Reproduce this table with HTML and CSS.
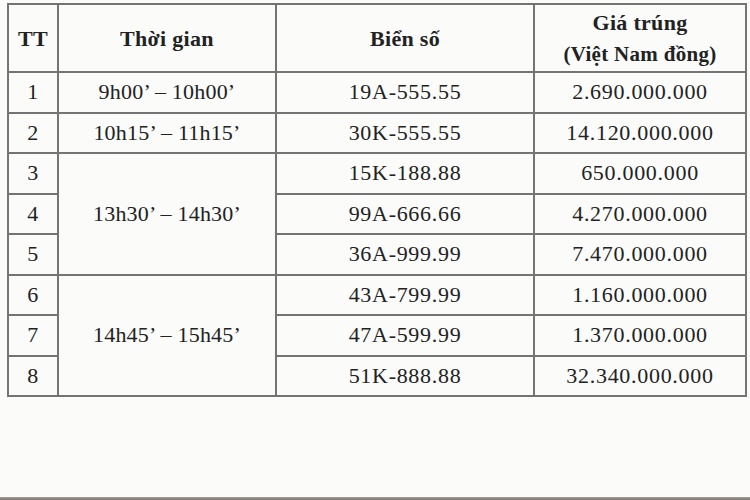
FILE: index.html
```html
<!DOCTYPE html>
<html lang="vi">
<head>
<meta charset="utf-8">
<link rel="stylesheet" href="styles.css">
</head>
<body>
<div class="sheet">
<table class="results">
  <colgroup>
    <col class="c-tt"><col class="c-time"><col class="c-plate"><col class="c-price">
  </colgroup>
  <thead>
    <tr class="head">
      <th>TT</th>
      <th>Thời gian</th>
      <th>Biển số</th>
      <th>Giá trúng<br><span class="unit">(Việt Nam đồng)</span></th>
    </tr>
  </thead>
  <tbody>
    <tr><td>1</td><td class="time">9h00’ – 10h00’</td><td>19A-555.55</td><td>2.690.000.000</td></tr>
    <tr><td>2</td><td class="time">10h15’ – 11h15’</td><td>30K-555.55</td><td>14.120.000.000</td></tr>
    <tr><td>3</td><td class="time" rowspan="3">13h30’ – 14h30’</td><td>15K-188.88</td><td>650.000.000</td></tr>
    <tr><td>4</td><td>99A-666.66</td><td>4.270.000.000</td></tr>
    <tr><td>5</td><td>36A-999.99</td><td>7.470.000.000</td></tr>
    <tr><td>6</td><td class="time" rowspan="3">14h45’ – 15h45’</td><td>43A-799.99</td><td>1.160.000.000</td></tr>
    <tr><td>7</td><td>47A-599.99</td><td>1.370.000.000</td></tr>
    <tr><td>8</td><td>51K-888.88</td><td>32.340.000.000</td></tr>
  </tbody>
</table>
</div>
<div class="scan-edge"></div>
</body>
</html>
```
FILE: styles.css
```css
html, body {
  margin: 0;
  padding: 0;
}
body {
  width: 750px;
  height: 500px;
  background: #fbfbfa;
  display: flex;
  flex-direction: column;
  font-family: "Liberation Serif", "Times New Roman", serif;
  color: #222222;
  overflow: hidden;
}
.sheet {
  padding: 3px 0 0 7px;
}
.results {
  border-collapse: collapse;
  table-layout: fixed;
  width: 740px;
}
.c-tt { width: 50px; }
.c-time { width: 218px; }
.c-plate { width: 258px; }
.c-price { width: 212px; }
.results th,
.results td {
  border: 2px solid #747474;
  text-align: center;
  vertical-align: middle;
  padding: 0;
  font-size: 22px;
}
.results td {
  height: 38.5px;
  font-weight: normal;
  letter-spacing: 0.7px;
}
.results td.time {
  letter-spacing: 0.2px;
}
.head th {
  height: 66px;
  font-weight: bold;
  line-height: 31px;
  letter-spacing: 0.3px;
}
.unit {
  font-size: 21px;
}
.scan-edge {
  margin-top: auto;
  height: 3px;
  background: linear-gradient(#a59c98, #7d7572);
}
```
